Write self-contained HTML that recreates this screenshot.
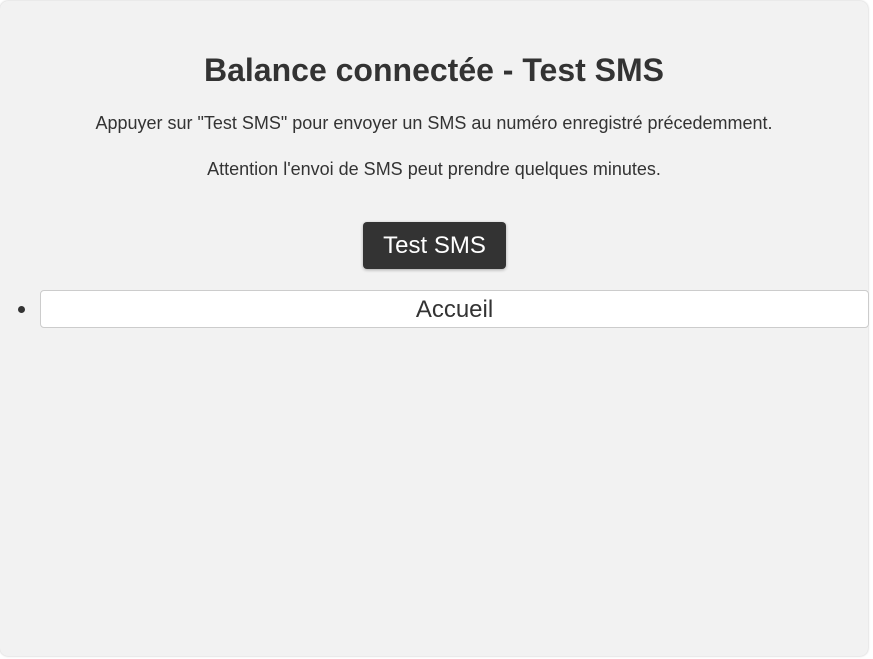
<!DOCTYPE html>
<html><head><style>
html,body{margin:0;padding:0;background:#fff;}
body{width:873px;height:659px;overflow:hidden;font-family:"Liberation Sans",Arial,sans-serif;color:#333;}
.c{position:absolute;left:0;top:1px;width:868px;height:655px;background:#f2f2f2;border-radius:8px;box-shadow:0 0 2px rgba(0,0,0,.25);}
h1{position:absolute;left:0;width:868px;top:50px;margin:0;text-align:center;font-size:32px;font-weight:bold;line-height:38px;}
p{position:absolute;left:0;width:868px;margin:0;text-align:center;font-size:18px;line-height:22px;}
.b{position:absolute;left:363px;top:221px;width:143px;height:47px;background:#333;color:#fff;border-radius:4px;font-size:24px;line-height:48px;text-align:center;box-shadow:0 1px 3px rgba(0,0,0,.3);}
.dot{position:absolute;left:18px;top:305px;width:7px;height:7px;border-radius:50%;background:#333;}
.a{position:absolute;left:40px;top:289px;width:827px;height:36px;background:#fff;border:1px solid #ccc;border-radius:4px;font-size:24px;line-height:37px;text-align:center;}
</style></head><body>
<div class="c">
<h1>Balance connectée - Test SMS</h1>
<p style="top:111px">Appuyer sur "Test SMS" pour envoyer un SMS au numéro enregistré précedemment.</p>
<p style="top:157px">Attention l'envoi de SMS peut prendre quelques minutes.</p>
<div class="b">Test SMS</div>
<div class="dot"></div>
<div class="a">Accueil</div>
</div>
</body></html>
